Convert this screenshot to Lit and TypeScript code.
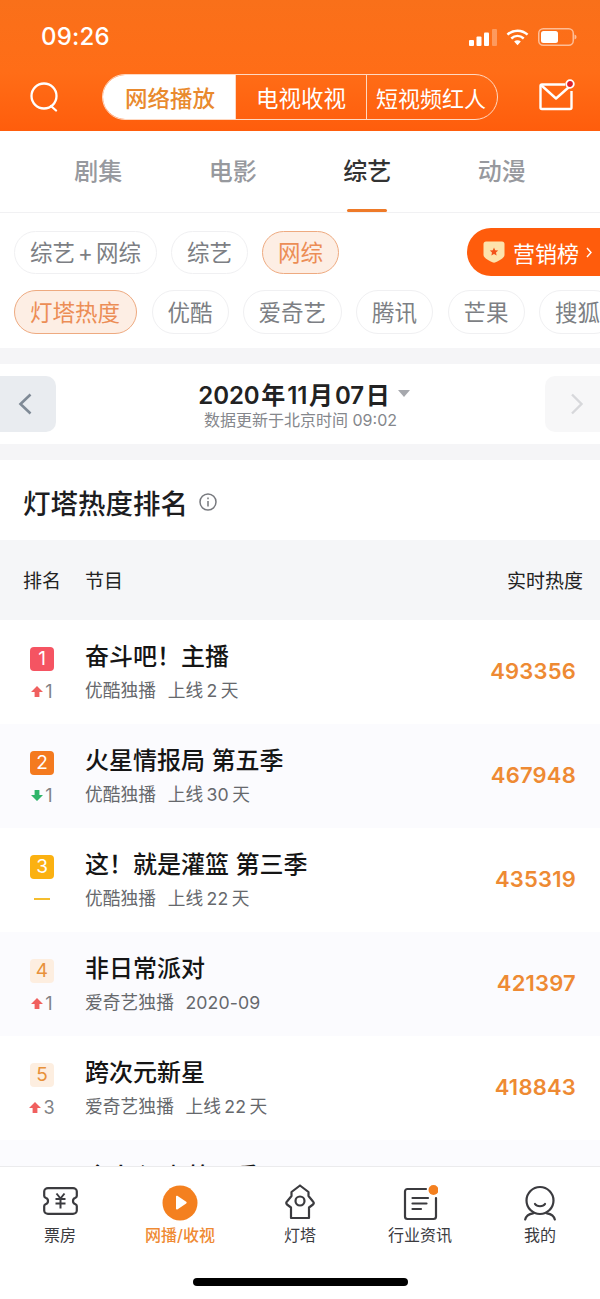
import { LitElement, html, css, svg } from "lit";
import { customElement } from "lit/decorators.js";

const rows = [
  { n: 1, cls: "r1", dir: "up", d: "1", t: "奋斗吧！主播", s: "优酷独播", o: "上线\u20092\u2009天", v: "493356" },
  { n: 2, cls: "r2", dir: "down", d: "1", t: "火星情报局 第五季", s: "优酷独播", o: "上线\u200930\u2009天", v: "467948" },
  { n: 3, cls: "r3", dir: "flat", d: "", t: "这！就是灌篮 第三季", s: "优酷独播", o: "上线\u200922\u2009天", v: "435319" },
  { n: 4, cls: "rx", dir: "up", d: "1", t: "非日常派对", s: "爱奇艺独播", o: "2020-09", v: "421397" },
  { n: 5, cls: "rx", dir: "up", d: "3", t: "跨次元新星", s: "爱奇艺独播", o: "上线\u200922\u2009天", v: "418843" },
];

const arrowUp = svg`<path d="M6 1 12 7H8.4V12H3.6V7H0Z" fill="#f0605f"/>`;
const arrowDown = svg`<path d="M6 12 0 6H3.6V1H8.4V6H12Z" fill="#2fb56a"/>`;

@customElement("app-root")
export class AppRoot extends LitElement {
  static styles = css`
    :host {
      display: flex; flex-direction: column; width: 600px; height: 1299px; overflow: hidden; background: #fff;
      font-family: "Inter", "Noto Sans CJK SC", sans-serif; color: #222;
    }
    svg { display: block; }
    .head { flex: none; height: 131px; background: linear-gradient(180deg, #f9701a 0%, #ff6d17 55%, #ff5d0c 100%); color: #fff; display: flex; flex-direction: column; }
    .status { height: 74px; display: flex; align-items: flex-start; justify-content: space-between; padding: 22px 23px 0 41px; box-sizing: border-box; }
    .time { font-size: 24px; line-height: 30px; font-weight: 500; letter-spacing: .2px; }
    .sicons { display: flex; align-items: center; gap: 9px; margin-top: 6px; }
    .nav { height: 46px; display: flex; align-items: center; padding: 0 26px 0 30px; }
    .seg { margin-left: 44px; width: 396px; height: 46px; box-sizing: border-box; border: 1.5px solid #ffd9c2; border-radius: 23px; display: grid; grid-template-columns: 132px 131px 1fr; overflow: hidden; font-size: 22.5px; font-weight: 400; }
    .seg div { display: flex; align-items: center; justify-content: center; white-space: nowrap; border-left: 1.5px solid #ffd9c2; }
    .seg .on { background: #fff; color: #e98a2e; border-left: 0; padding-left: 2px; font-weight: 500; }
    .seg .sm { font-size: 22px; padding-right: 2px; }
    .mail { margin-left: auto; overflow: visible; }
    .tabs { flex: none; height: 82px; box-sizing: border-box; padding: 0 31px; display: grid; grid-template-columns: repeat(4, 1fr); border-bottom: 1px solid #f1f1f3; }
    .tab { font-size: 24px; color: #97999e; display: flex; flex-direction: column; align-items: center; padding-top: 23px; font-weight: 500; }
    .tab span { line-height: 36px; }
    .tab.on { color: #333; }
    .tab i { margin-top: auto; width: 40px; height: 3px; border-radius: 2px; background: #ee7a28; }
    .filters { flex: none; height: 135px; box-sizing: border-box; padding-top: 15px; display: flex; flex-direction: column; gap: 14px; overflow: hidden; }
    .frow { display: flex; align-items: center; gap: 14px; padding-left: 14px; height: 48px; }
    .frow.b { height: 44px; gap: 14.5px; }
    .chip { flex: none; height: 43px; box-sizing: border-box; padding: 0 15px; border: 1px solid #f0f0f2; border-radius: 22px; font-size: 22.5px; line-height: 42px; color: #7d7f84; white-space: nowrap; }
    .b .chip { height: 44px; line-height: 43px; }
    .chip.on { background: #fdeee4; border-color: #eeaa80; color: #ec8d55; }
    .chip.wide { padding: 0 16px 0 15px; }
    .chip.tight { padding: 0 14.5px; }
    .plus { margin: 0 3px; }
    .rank-btn { flex: none; margin-left: auto; width: 133px; height: 48px; box-sizing: border-box; background: #ff5c0c; border-radius: 24px 0 0 24px; color: #fff; display: flex; align-items: center; padding-left: 16px; gap: 8px; font-size: 22px; white-space: nowrap; }
    .rank-btn svg:last-child { margin-left: -1px; }
    .band { flex: none; height: 16px; background: #f5f5f7; }
    .date { flex: none; height: 80px; display: flex; align-items: center; justify-content: space-between; }
    .dbtn { width: 38px; height: 56px; padding-left: 18px; background: #e9ecf0; border-radius: 0 10px 10px 0; display: flex; align-items: center; }
    .dbtn.r { background: #f7f7f8; border-radius: 10px 0 0 10px; width: 30px; padding-left: 25px; }
    .dmid { display: flex; flex-direction: column; align-items: center; }
    .dmain { font-size: 24px; line-height: 30px; font-weight: 600; color: #222; display: flex; align-items: center; gap: 8px; white-space: nowrap; margin-top: 3px; padding-left: 7px; letter-spacing: -.1px; }
    .tri { width: 0; height: 0; border: 6.5px solid transparent; border-top: 7px solid #a6a8ad; border-bottom: 0; margin-top: -4px; }
    .dsub { font-size: 16px; line-height: 22px; color: #85878c; margin-top: -2px; white-space: nowrap; }
    .content { flex: 1; min-height: 0; overflow: hidden; }
    .sect { height: 80px; box-sizing: border-box; padding: 3px 0 0 23px; display: flex; align-items: center; gap: 11px; font-size: 27.5px; font-weight: 500; color: #1d1d1f; }
    .thead { height: 80px; box-sizing: border-box; padding: 0 17px 2px 23px; background: #f5f6f8; display: flex; align-items: center; font-size: 19px; color: #222; }
    .thead .a { width: 62px; }
    .thead .c { margin-left: auto; }
    .row { height: 104px; display: flex; box-sizing: border-box; padding: 19px 24px 0 0; }
    .row.alt { background: #fbfbfe; }
    .rk { width: 85px; flex: none; display: flex; flex-direction: column; align-items: center; padding: 8px 1px 0 0; box-sizing: border-box; }
    .badge { width: 24px; height: 24px; border-radius: 4px; color: #fff; font-size: 19px; line-height: 24px; text-align: center; }
    .r1 { background: #f55462; }
    .r2 { background: #f47a1f; }
    .r3 { background: #fbb111; }
    .rx { background: #fdeee0; color: #e8913a; }
    .chg { display: flex; align-items: center; gap: 2px; height: 20px; margin-top: 10px; font-size: 18px; color: #808286; }
    .flat { width: 16px; height: 2.5px; background: #f5bd2e; }
    .info { flex: 1; min-width: 0; }
    .t { font-size: 24px; line-height: 36px; font-weight: 500; color: #151515; white-space: nowrap; }
    .s { font-size: 17.7px; line-height: 26px; color: #66686c; margin-top: 3px; display: flex; gap: 11.500px; white-space: nowrap; letter-spacing: .1px; }
    .v { align-self: center; margin-top: -22px; font-size: 22px; font-weight: 600; color: #ee8a33; letter-spacing: .2px; }
    .bar { flex: none; height: 133px; background: #fff; border-top: 1px solid #ebebed; box-sizing: border-box; display: flex; flex-direction: column; }
    .items { display: grid; grid-template-columns: repeat(5, 120px); padding-top: 17px; }
    .it { display: flex; flex-direction: column; align-items: center; font-size: 16px; color: #3b3b3f; }
    .it .ic { height: 38px; width: 44px; display: flex; align-items: center; justify-content: center; }
    .it span { line-height: 24px; margin-top: 1px; white-space: nowrap; }
    .it.on { color: #ef8a33; font-weight: 500; }
    .home { width: 215px; height: 8px; border-radius: 4px; background: #000; margin: auto auto 13px; }
  `;

  private rowTpl(r: (typeof rows)[number], i: number) {
    return html`<div class="row ${i % 2 ? "alt" : ""}">
      <div class="rk">
        <div class="badge ${r.cls}">${r.n}</div>
        <div class="chg">
          ${r.dir === "flat"
            ? html`<div class="flat"></div>`
            : html`<svg width="12" height="13" viewBox="0 0 12 13">${r.dir === "up" ? arrowUp : arrowDown}</svg><span>${r.d}</span>`}
        </div>
      </div>
      <div class="info">
        <div class="t">${r.t}</div>
        <div class="s"><span>${r.s}</span><span>${r.o}</span></div>
      </div>
      <div class="v">${r.v}</div>
    </div>`;
  }

  render() {
    return html`
      <div class="head">
        <div class="status">
          <div class="time">09:26</div>
          <div class="sicons">
            <svg width="28" height="17" viewBox="0 0 28 17">
              <rect x="0" y="11" width="5" height="6" rx="1" fill="#fff"/>
              <rect x="7.500" y="7.500" width="5" height="9.500" rx="1" fill="#fff"/>
              <rect x="15" y="3.500" width="5" height="13.500" rx="1" fill="#fff"/>
              <rect x="23" y="0" width="5" height="17" rx="1" fill="#fff" opacity=".3"/>
            </svg>
            <svg width="23" height="18" viewBox="0 0 24 18" fill="none" stroke="#fff" stroke-width="2.600">
              <path d="M1.500 6.500C7.500 1 16.500 1 22.500 6.500"/>
              <path d="M5.500 10.500C9.500 7 14.500 7 18.500 10.500"/>
              <path d="M12 17.500 8.500 13.800C10.500 12 13.500 12 15.500 13.800Z" fill="#fff" stroke="none"/>
            </svg>
            <svg width="39" height="18" viewBox="0 0 39 18">
              <rect x=".75" y=".75" width="34.500" height="16.500" rx="4.500" fill="none" stroke="#fff" stroke-opacity=".55" stroke-width="1.500"/>
              <rect x="3" y="3" width="17" height="12" rx="2.500" fill="#fff"/>
              <path d="M36.500 6.500C38 7 38.500 8 38.500 9S38 11 36.500 11.500Z" fill="#fff" fill-opacity=".55"/>
            </svg>
          </div>
        </div>
        <div class="nav">
          <svg width="28" height="30" viewBox="0 0 28 30" fill="none" stroke="#fff" stroke-width="2.300" stroke-linecap="round">
            <circle cx="14" cy="14" r="12.500"/>
            <path d="M21 24 26 28.500"/>
          </svg>
          <div class="seg">
            <div class="on">网络播放</div>
            <div>电视收视</div>
            <div class="sm">短视频红人</div>
          </div>
          <svg class="mail" width="36" height="32" viewBox="0 0 36 32" fill="none" stroke="#fff" stroke-width="2.400" stroke-linejoin="round">
            <path d="M27 3.500H4C3 3.500 2.500 4 2.500 5V26.500C2.500 27.500 3 28 4 28H32C33 28 33.500 27.500 33.500 26.500V10"/>
            <path d="M3 4 18 17.500 31 6"/>
            <circle cx="32" cy="3" r="3.800" fill="#dc1f2c" stroke="#fff" stroke-width="1.800"/>
          </svg>
        </div>
      </div>
      <div class="tabs">
        <div class="tab"><span>剧集</span></div>
        <div class="tab"><span>电影</span></div>
        <div class="tab on"><span>综艺</span><i></i></div>
        <div class="tab"><span>动漫</span></div>
      </div>
      <div class="filters">
        <div class="frow">
          <div class="chip">综艺<span class="plus">+</span>网综</div>
          <div class="chip">综艺</div>
          <div class="chip on">网综</div>
          <div class="rank-btn">
            <svg width="22" height="22" viewBox="0 0 22 22">
              <path d="M3 0.500H19C20.500 0.500 21.500 1.500 21.500 3V14C21.500 17 15 20.500 11 21.800 7 20.500 .5 17 .5 14V3C.5 1.500 1.500 .5 3 .5Z" fill="#fde3ac"/>
              <path d="M11 6.500 12.200 9.200 15.200 9.500 13 11.500 13.600 14.500 11 13 8.400 14.500 9 11.500 6.800 9.500 9.800 9.200Z" fill="#f2521a"/>
            </svg>
            <span>营销榜</span>
            <svg width="6" height="11" viewBox="0 0 6 11" fill="none" stroke="#fff" stroke-width="1.400"><path d="M1 1 5 5.500 1 10"/></svg>
          </div>
        </div>
        <div class="frow b">
          <div class="chip on wide">灯塔热度</div>
          <div class="chip">优酷</div>
          <div class="chip tight">爱奇艺</div>
          <div class="chip">腾讯</div>
          <div class="chip">芒果</div>
          <div class="chip">搜狐</div>
        </div>
      </div>
      <div class="band"></div>
      <div class="date">
        <div class="dbtn">
          <svg width="14" height="24" viewBox="0 0 14 24" fill="none" stroke="#7f8a96" stroke-width="2.600"><path d="M12.500 2.500 2.500 12 12.500 21.500"/></svg>
        </div>
        <div class="dmid">
          <div class="dmain"><span>2020\u200A年\u200A11\u200A月\u200A07\u200A日</span><div class="tri"></div></div>
          <div class="dsub">数据更新于北京时间 09:02</div>
        </div>
        <div class="dbtn r">
          <svg width="14" height="24" viewBox="0 0 14 24" fill="none" stroke="#d7d8db" stroke-width="2.400"><path d="M2 2.500 11.500 12 2 21.500"/></svg>
        </div>
      </div>
      <div class="band"></div>
      <div class="content">
        <div class="sect">
          <span>灯塔热度排名</span>
          <svg width="18" height="18" viewBox="0 0 18 18" fill="none" stroke="#77797e" stroke-width="1.500">
            <circle cx="9" cy="9" r="8"/><path d="M9 8V13.500M9 4.500V6.200"/>
          </svg>
        </div>
        <div class="thead"><span class="a">排名</span><span>节目</span><span class="c">实时热度</span></div>
        ${rows.map((r, i) => this.rowTpl(r, i))}
        <div class="row alt"><div class="rk"></div><div class="info"><div class="t">令人心动 第二季</div></div></div>
      </div>
      <div class="bar">
        <div class="items">
          <div class="it">
            <div class="ic"><svg width="35" height="32" viewBox="0 0 35 32" fill="none" stroke="#3b3b3f" stroke-width="2.200" stroke-linejoin="round">
              <path d="M5 1.200H30C32 1.200 33.800 2.500 33.800 4.500V9C33.800 10 33 10.500 32 11C30.500 11.500 30 12.500 30 14S30.500 16.500 32 17C33 17.500 33.800 18 33.800 19V23.500C33.800 25.500 32 26.800 30 26.800H5C3 26.800 1.200 25.500 1.200 23.500V19C1.200 18 2 17.500 3 17C4.500 16.500 5 15.500 5 14S4.500 11.500 3 11C2 10.500 1.200 10 1.200 9V4.500C1.200 2.500 3 1.200 5 1.200Z"/>
              <path d="M13.500 6.500 17.500 11.500 21.500 6.500M12.500 12H22.500M12.500 16.500H22.500M17.500 11.500V21.500" stroke-width="2"/>
            </svg></div>
            <span>票房</span>
          </div>
          <div class="it on">
            <div class="ic"><svg width="36" height="36" viewBox="0 0 36 36">
              <circle cx="18" cy="18" r="17.500" fill="#f4801f"/>
              <path d="M14 11.500C14 10.800 14.700 10.400 15.300 10.800L24.200 16.800C24.800 17.200 24.800 18 24.200 18.400L15.300 24.400C14.700 24.800 14 24.400 14 23.700Z" fill="#fff"/>
            </svg></div>
            <span>网播/收视</span>
          </div>
          <div class="it">
            <div class="ic"><svg width="30" height="38" viewBox="0 0 30 38" fill="none" stroke="#3b3b3f" stroke-width="2.200" stroke-linejoin="round">
              <path d="M15 1.500 6.500 8V12L2 17.500C1 18.500 1 19.500 2 20.500L6 23.500V34H24V23.500L28 20.500C29 19.500 29 18.500 28 17.500L23.500 12V8Z"/>
              <circle cx="15" cy="17" r="4.500"/>
            </svg></div>
            <span>灯塔</span>
          </div>
          <div class="it">
            <div class="ic"><svg width="36" height="36" viewBox="0 0 36 36" fill="none" stroke="#3b3b3f" stroke-width="2.200" stroke-linecap="round">
              <path d="M24 4H5.500C4 4 3 5 3 6.500V31.500C3 33 4 34 5.500 34H31.500C33 34 34 33 34 31.500V13"/>
              <path d="M10.500 13H26M10.500 18.500H24.500M10.500 24H19"/>
              <circle cx="31.500" cy="5" r="5" fill="#f4801f" stroke="none"/>
            </svg></div>
            <span>行业资讯</span>
          </div>
          <div class="it">
            <div class="ic"><svg width="32" height="36" viewBox="0 0 32 36" fill="none" stroke="#3b3b3f" stroke-width="2.200" stroke-linecap="round">
              <circle cx="16" cy="15.500" r="13.500"/>
              <path d="M11 19C13 22 19 22 21 19"/>
              <path d="M1.200 34.500C2 31 4.500 29 9 28.300M30.800 34.500C30 31 27.500 29 23 28.300"/>
            </svg></div>
            <span>我的</span>
          </div>
        </div>
        <div class="home"></div>
      </div>
    `;
  }
}
